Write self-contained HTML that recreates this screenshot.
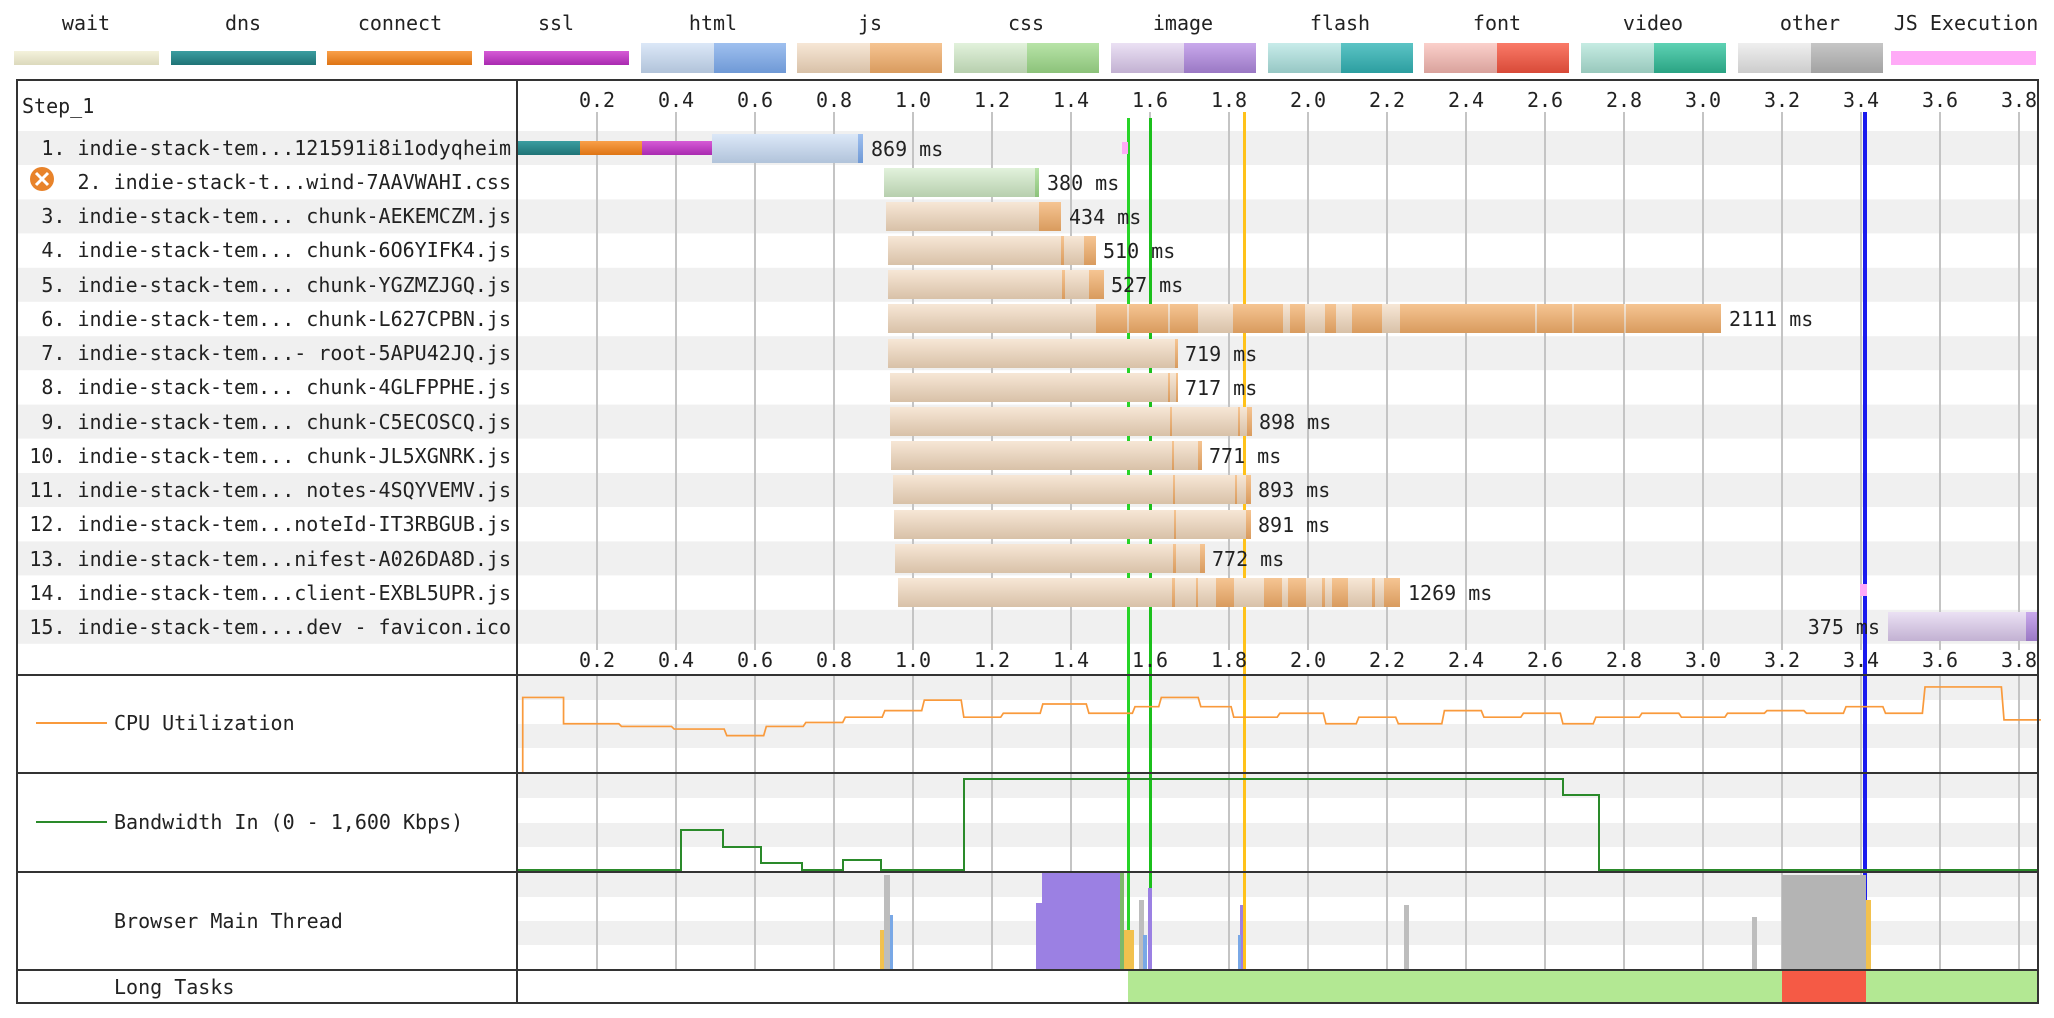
<!DOCTYPE html>
<html><head><meta charset="utf-8"><style>
html,body{margin:0;padding:0;background:#fff;width:2054px;height:1018px;overflow:hidden}
svg{display:block}
text{font-family:"DejaVu Sans Mono","Liberation Mono",monospace;font-size:20px;fill:#222}
</style></head><body>
<svg width="2054" height="1018" viewBox="0 0 2054 1018" xmlns="http://www.w3.org/2000/svg">
<defs>
<linearGradient id="gwait" x1="0" y1="0" x2="0" y2="1"><stop offset="0" stop-color="#f4f2dc"/><stop offset="1" stop-color="#dcd9bc"/></linearGradient>
<linearGradient id="gdns" x1="0" y1="0" x2="0" y2="1"><stop offset="0" stop-color="#3b9da0"/><stop offset="1" stop-color="#1f7376"/></linearGradient>
<linearGradient id="gcon" x1="0" y1="0" x2="0" y2="1"><stop offset="0" stop-color="#f9a04a"/><stop offset="1" stop-color="#de7414"/></linearGradient>
<linearGradient id="gssl" x1="0" y1="0" x2="0" y2="1"><stop offset="0" stop-color="#d65bd6"/><stop offset="1" stop-color="#a92ab0"/></linearGradient>
<linearGradient id="ghtmlL" x1="0" y1="0" x2="0" y2="1"><stop offset="0" stop-color="#dce8f8"/><stop offset="1" stop-color="#b1c3da"/></linearGradient>
<linearGradient id="ghtmlD" x1="0" y1="0" x2="0" y2="1"><stop offset="0" stop-color="#9fc0ef"/><stop offset="1" stop-color="#6f99d6"/></linearGradient>
<linearGradient id="gjsL" x1="0" y1="0" x2="0" y2="1"><stop offset="0" stop-color="#f7e7d6"/><stop offset="1" stop-color="#d8c1a8"/></linearGradient>
<linearGradient id="gjsD" x1="0" y1="0" x2="0" y2="1"><stop offset="0" stop-color="#f6c593"/><stop offset="1" stop-color="#d99b5e"/></linearGradient>
<linearGradient id="gcssL" x1="0" y1="0" x2="0" y2="1"><stop offset="0" stop-color="#e2f2dc"/><stop offset="1" stop-color="#b7cfae"/></linearGradient>
<linearGradient id="gcssD" x1="0" y1="0" x2="0" y2="1"><stop offset="0" stop-color="#b8e4a8"/><stop offset="1" stop-color="#8cc27a"/></linearGradient>
<linearGradient id="gimgL" x1="0" y1="0" x2="0" y2="1"><stop offset="0" stop-color="#ebe1f4"/><stop offset="1" stop-color="#c2b1d2"/></linearGradient>
<linearGradient id="gimgD" x1="0" y1="0" x2="0" y2="1"><stop offset="0" stop-color="#c9a9ec"/><stop offset="1" stop-color="#9a78c4"/></linearGradient>
<linearGradient id="gflL" x1="0" y1="0" x2="0" y2="1"><stop offset="0" stop-color="#c8ecea"/><stop offset="1" stop-color="#96c7c4"/></linearGradient>
<linearGradient id="gflD" x1="0" y1="0" x2="0" y2="1"><stop offset="0" stop-color="#5cc4c5"/><stop offset="1" stop-color="#2c9ea0"/></linearGradient>
<linearGradient id="gfoL" x1="0" y1="0" x2="0" y2="1"><stop offset="0" stop-color="#fbd0cb"/><stop offset="1" stop-color="#d9a29c"/></linearGradient>
<linearGradient id="gfoD" x1="0" y1="0" x2="0" y2="1"><stop offset="0" stop-color="#fa7a68"/><stop offset="1" stop-color="#d84a38"/></linearGradient>
<linearGradient id="gviL" x1="0" y1="0" x2="0" y2="1"><stop offset="0" stop-color="#c6ece3"/><stop offset="1" stop-color="#98c8bc"/></linearGradient>
<linearGradient id="gviD" x1="0" y1="0" x2="0" y2="1"><stop offset="0" stop-color="#5ed2b4"/><stop offset="1" stop-color="#2aa383"/></linearGradient>
<linearGradient id="gotL" x1="0" y1="0" x2="0" y2="1"><stop offset="0" stop-color="#efefef"/><stop offset="1" stop-color="#cccccc"/></linearGradient>
<linearGradient id="gotD" x1="0" y1="0" x2="0" y2="1"><stop offset="0" stop-color="#c6c6c6"/><stop offset="1" stop-color="#a2a2a2"/></linearGradient>
</defs>

<!-- Legend -->
<g text-anchor="middle">
<text x="86" y="30">wait</text>
<text x="243" y="30">dns</text>
<text x="400" y="30">connect</text>
<text x="556" y="30">ssl</text>
<text x="713" y="30">html</text>
<text x="870" y="30">js</text>
<text x="1026" y="30">css</text>
<text x="1183" y="30">image</text>
<text x="1340" y="30">flash</text>
<text x="1497" y="30">font</text>
<text x="1653" y="30">video</text>
<text x="1810" y="30">other</text>
<text x="1966" y="30">JS Execution</text>
</g>
<rect x="14" y="51" width="145" height="14" fill="url(#gwait)"/>
<rect x="171" y="51" width="145" height="14" fill="url(#gdns)"/>
<rect x="327" y="51" width="145" height="14" fill="url(#gcon)"/>
<rect x="484" y="51" width="145" height="14" fill="url(#gssl)"/>
<rect x="641" y="43" width="73" height="30" fill="url(#ghtmlL)"/><rect x="714" y="43" width="72" height="30" fill="url(#ghtmlD)"/>
<rect x="797" y="43" width="73" height="30" fill="url(#gjsL)"/><rect x="870" y="43" width="72" height="30" fill="url(#gjsD)"/>
<rect x="954" y="43" width="73" height="30" fill="url(#gcssL)"/><rect x="1027" y="43" width="72" height="30" fill="url(#gcssD)"/>
<rect x="1111" y="43" width="73" height="30" fill="url(#gimgL)"/><rect x="1184" y="43" width="72" height="30" fill="url(#gimgD)"/>
<rect x="1268" y="43" width="73" height="30" fill="url(#gflL)"/><rect x="1341" y="43" width="72" height="30" fill="url(#gflD)"/>
<rect x="1424" y="43" width="73" height="30" fill="url(#gfoL)"/><rect x="1497" y="43" width="72" height="30" fill="url(#gfoD)"/>
<rect x="1581" y="43" width="73" height="30" fill="url(#gviL)"/><rect x="1654" y="43" width="72" height="30" fill="url(#gviD)"/>
<rect x="1738" y="43" width="73" height="30" fill="url(#gotL)"/><rect x="1811" y="43" width="72" height="30" fill="url(#gotD)"/>
<rect x="1891" y="51" width="145" height="14" fill="#ffaaf7"/>

<!-- row bands -->
<g fill="#f0f0f0">
<rect x="18" y="131" width="2020" height="34"/>
<rect x="18" y="199.4" width="2020" height="34"/>
<rect x="18" y="267.8" width="2020" height="34"/>
<rect x="18" y="336.2" width="2020" height="34"/>
<rect x="18" y="404.6" width="2020" height="34"/>
<rect x="18" y="473" width="2020" height="34"/>
<rect x="18" y="541.4" width="2020" height="34"/>
<rect x="18" y="609.8" width="2020" height="34"/>
</g>
<!-- graph bands -->
<g fill="#f0f0f0">
<rect x="518" y="676" width="1520" height="24"/><rect x="518" y="724" width="1520" height="24"/>
<rect x="518" y="774" width="1520" height="24"/><rect x="518" y="823" width="1520" height="24"/>
<rect x="518" y="873" width="1520" height="24"/><rect x="518" y="921" width="1520" height="24"/>
</g>

<!-- gridlines -->
<g stroke="#c4c4c4" stroke-width="2">
<path d="M597 112V650M676 112V650M755 112V650M834 112V650M913 112V650M992 112V650M1071 112V650M1150 112V650M1229 112V650M1308 112V650M1387 112V650M1466 112V650M1545 112V650M1624 112V650M1703 112V650M1782 112V650M1861 112V650M1940 112V650M2019 112V650"/>
<path d="M597 676V969M676 676V969M755 676V969M834 676V969M913 676V969M992 676V969M1071 676V969M1150 676V969M1229 676V969M1308 676V969M1387 676V969M1466 676V969M1545 676V969M1624 676V969M1703 676V969M1782 676V969M1861 676V969M1940 676V969M2019 676V969"/>
</g>

<!-- event lines -->
<g>
<rect x="1127" y="118" width="3" height="851" fill="#28d428"/>
<rect x="1149" y="118" width="3" height="851" fill="#1bbf1b"/>
<rect x="1243" y="112" width="3" height="857" fill="#ffc21a"/>
<rect x="1863" y="112" width="4" height="857" fill="#1a1aee"/>
</g>

<!-- axis labels -->
<g text-anchor="middle">
<text x="597" y="107">0.2</text><text x="676" y="107">0.4</text><text x="755" y="107">0.6</text><text x="834" y="107">0.8</text><text x="913" y="107">1.0</text><text x="992" y="107">1.2</text><text x="1071" y="107">1.4</text><text x="1150" y="107">1.6</text><text x="1229" y="107">1.8</text><text x="1308" y="107">2.0</text><text x="1387" y="107">2.2</text><text x="1466" y="107">2.4</text><text x="1545" y="107">2.6</text><text x="1624" y="107">2.8</text><text x="1703" y="107">3.0</text><text x="1782" y="107">3.2</text><text x="1861" y="107">3.4</text><text x="1940" y="107">3.6</text><text x="2019" y="107">3.8</text>
<text x="597" y="667">0.2</text><text x="676" y="667">0.4</text><text x="755" y="667">0.6</text><text x="834" y="667">0.8</text><text x="913" y="667">1.0</text><text x="992" y="667">1.2</text><text x="1071" y="667">1.4</text><text x="1150" y="667">1.6</text><text x="1229" y="667">1.8</text><text x="1308" y="667">2.0</text><text x="1387" y="667">2.2</text><text x="1466" y="667">2.4</text><text x="1545" y="667">2.6</text><text x="1624" y="667">2.8</text><text x="1703" y="667">3.0</text><text x="1782" y="667">3.2</text><text x="1861" y="667">3.4</text><text x="1940" y="667">3.6</text><text x="2019" y="667">3.8</text>
</g>

<text x="22" y="113">Step_1</text>

<!-- row labels -->
<g text-anchor="end">
<text x="511" y="155">1. indie-stack-tem...121591i8i1odyqheim</text>
<text x="511" y="189">2. indie-stack-t...wind-7AAVWAHI.css</text>
<text x="511" y="223">3. indie-stack-tem... chunk-AEKEMCZM.js</text>
<text x="511" y="257">4. indie-stack-tem... chunk-6O6YIFK4.js</text>
<text x="511" y="292">5. indie-stack-tem... chunk-YGZMZJGQ.js</text>
<text x="511" y="326">6. indie-stack-tem... chunk-L627CPBN.js</text>
<text x="511" y="360">7. indie-stack-tem...- root-5APU42JQ.js</text>
<text x="511" y="394">8. indie-stack-tem... chunk-4GLFPPHE.js</text>
<text x="511" y="429">9. indie-stack-tem... chunk-C5ECOSCQ.js</text>
<text x="511" y="463">10. indie-stack-tem... chunk-JL5XGNRK.js</text>
<text x="511" y="497">11. indie-stack-tem... notes-4SQYVEMV.js</text>
<text x="511" y="531">12. indie-stack-tem...noteId-IT3RBGUB.js</text>
<text x="511" y="566">13. indie-stack-tem...nifest-A026DA8D.js</text>
<text x="511" y="600">14. indie-stack-tem...client-EXBL5UPR.js</text>
<text x="511" y="634">15. indie-stack-tem....dev - favicon.ico</text>
</g>
<circle cx="42" cy="179" r="12" fill="#e8832a"/>
<path d="M36 173L48 185M48 173L36 185" stroke="#fff" stroke-width="3"/>

<!-- bars -->
<!-- row1 -->
<rect x="518" y="141" width="62" height="14" fill="url(#gdns)"/>
<rect x="580" y="141" width="62" height="14" fill="url(#gcon)"/>
<rect x="642" y="141" width="72" height="14" fill="url(#gssl)"/>
<rect x="712" y="134" width="150" height="29" fill="url(#ghtmlL)"/>
<rect x="858" y="134" width="5" height="29" fill="url(#ghtmlD)"/>
<text x="871" y="156">869 ms</text>
<!-- row2 css -->
<rect x="884" y="168" width="155" height="29" fill="url(#gcssL)"/>
<rect x="1035" y="168" width="4" height="29" fill="url(#gcssD)"/>
<text x="1047" y="190">380 ms</text>
<!-- row3 -->
<rect x="886" y="202" width="175" height="29" fill="url(#gjsL)"/>
<rect x="1039" y="202" width="22" height="29" fill="url(#gjsD)"/>
<text x="1069" y="224">434 ms</text>
<!-- row4 -->
<rect x="888" y="236" width="208" height="29" fill="url(#gjsL)"/>
<rect x="1061" y="236" width="3" height="29" fill="url(#gjsD)"/>
<rect x="1084" y="236" width="12" height="29" fill="url(#gjsD)"/>
<text x="1103" y="258">510 ms</text>
<!-- row5 -->
<rect x="888" y="270" width="216" height="29" fill="url(#gjsL)"/>
<rect x="1062" y="270" width="3" height="29" fill="url(#gjsD)"/>
<rect x="1089" y="270" width="15" height="29" fill="url(#gjsD)"/>
<text x="1111" y="292">527 ms</text>
<!-- row6 -->
<rect x="888" y="304" width="833" height="29" fill="url(#gjsL)"/>
<g fill="url(#gjsD)">
<rect x="1096" y="304" width="31" height="29"/><rect x="1129" y="304" width="39" height="29"/><rect x="1170" y="304" width="28" height="29"/>
<rect x="1233" y="304" width="50" height="29"/><rect x="1290" y="304" width="15" height="29"/><rect x="1325" y="304" width="11" height="29"/>
<rect x="1352" y="304" width="30" height="29"/><rect x="1400" y="304" width="135" height="29"/><rect x="1537" y="304" width="35" height="29"/>
<rect x="1574" y="304" width="50" height="29"/><rect x="1626" y="304" width="95" height="29"/>
</g>
<text x="1729" y="326">2111 ms</text>
<!-- row7 -->
<rect x="888" y="339" width="290" height="29" fill="url(#gjsL)"/>
<rect x="1175" y="339" width="3" height="29" fill="url(#gjsD)"/>
<text x="1185" y="361">719 ms</text>
<!-- row8 -->
<rect x="890" y="373" width="288" height="29" fill="url(#gjsL)"/>
<rect x="1168" y="373" width="2" height="29" fill="url(#gjsD)"/>
<rect x="1176" y="373" width="2" height="29" fill="url(#gjsD)"/>
<text x="1185" y="395">717 ms</text>
<!-- row9 -->
<rect x="890" y="407" width="362" height="29" fill="url(#gjsL)"/>
<rect x="1170" y="407" width="2" height="29" fill="url(#gjsD)"/>
<rect x="1238" y="407" width="2" height="29" fill="url(#gjsD)"/>
<rect x="1247" y="407" width="5" height="29" fill="url(#gjsD)"/>
<text x="1259" y="429">898 ms</text>
<!-- row10 -->
<rect x="891" y="441" width="311" height="29" fill="url(#gjsL)"/>
<rect x="1172" y="441" width="2" height="29" fill="url(#gjsD)"/>
<rect x="1198" y="441" width="4" height="29" fill="url(#gjsD)"/>
<text x="1209" y="463">771 ms</text>
<!-- row11 -->
<rect x="893" y="475" width="358" height="29" fill="url(#gjsL)"/>
<rect x="1173" y="475" width="2" height="29" fill="url(#gjsD)"/>
<rect x="1235" y="475" width="2" height="29" fill="url(#gjsD)"/>
<rect x="1246" y="475" width="5" height="29" fill="url(#gjsD)"/>
<text x="1258" y="497">893 ms</text>
<!-- row12 -->
<rect x="894" y="510" width="357" height="29" fill="url(#gjsL)"/>
<rect x="1174" y="510" width="2" height="29" fill="url(#gjsD)"/>
<rect x="1246" y="510" width="5" height="29" fill="url(#gjsD)"/>
<text x="1258" y="532">891 ms</text>
<!-- row13 -->
<rect x="895" y="544" width="310" height="29" fill="url(#gjsL)"/>
<rect x="1173" y="544" width="3" height="29" fill="url(#gjsD)"/>
<rect x="1200" y="544" width="5" height="29" fill="url(#gjsD)"/>
<text x="1212" y="566">772 ms</text>
<!-- row14 -->
<rect x="898" y="578" width="502" height="29" fill="url(#gjsL)"/>
<g fill="url(#gjsD)">
<rect x="1172" y="578" width="3" height="29"/><rect x="1196" y="578" width="2" height="29"/><rect x="1216" y="578" width="18" height="29"/>
<rect x="1264" y="578" width="18" height="29"/><rect x="1288" y="578" width="18" height="29"/><rect x="1322" y="578" width="3" height="29"/>
<rect x="1332" y="578" width="16" height="29"/><rect x="1372" y="578" width="3" height="29"/><rect x="1384" y="578" width="16" height="29"/>
</g>
<text x="1408" y="600">1269 ms</text>
<!-- row15 -->
<rect x="1888" y="612" width="150" height="29" fill="url(#gimgL)"/>
<rect x="2026" y="612" width="12" height="29" fill="url(#gimgD)"/>
<text x="1880" y="634" text-anchor="end">375 ms</text>
<!-- js exec marks -->
<rect x="1122" y="142" width="6" height="12" fill="#ffaaf7"/>
<rect x="1860" y="584" width="7" height="12" fill="#ffaaf7"/>

<!-- CPU graph -->
<g transform="scale(1.3167) translate(0,-3.3)">
<polyline fill="none" stroke="#f99a3c" stroke-width="1.3" points="397,590 397,533 428,533 428,553 470,553 472,555 510,555 512,557 550,557 552,562 580,562 582,555 610,555 612,552 640,552 642,548 670,548 672,543 700,543 702,535 730,535 732,548 760,548 762,545 790,545 792,538 825,538 827,545 860,545 862,540 880,540 882,533 910,533 912,540 935,540 937,548 970,548 972,545 1005,545 1007,553 1030,553 1032,548 1060,548 1062,553 1095,553 1097,543 1125,543 1127,548 1155,548 1157,545 1185,545 1187,553 1210,553 1212,548 1245,548 1247,545 1275,545 1277,548 1310,548 1312,545 1340,545 1342,543 1370,543 1372,545 1400,545 1402,540 1430,540 1432,545 1460,545 1462,525 1520,525 1522,550 1550,550"/>
</g>
<!-- Bandwidth -->
<g transform="translate(0,0)">
<polyline fill="none" stroke="#2a8a2a" stroke-width="2" points="518,870 681,870 681,830 723,830 723,847 761,847 761,863 802,863 802,870 843,870 843,860 881,860 881,870 964,870 964,779 1563,779 1563,795 1599,795 1599,870 2038,870"/>
</g>

<!-- Main thread -->
<g>
<rect x="1036" y="903" width="7" height="66" fill="#9b80e3"/>
<rect x="1042" y="872" width="80" height="97" fill="#9b80e3"/>
<rect x="1120" y="872" width="4" height="97" fill="#7fb86a"/>
<rect x="1124" y="930" width="10" height="39" fill="#f2c14e"/>
<rect x="1139" y="900" width="5" height="69" fill="#bdbdbd"/>
<rect x="1143" y="935" width="4" height="34" fill="#79a8e6"/>
<rect x="1148" y="888" width="4" height="81" fill="#9b80e3"/>
<rect x="1240" y="905" width="3" height="64" fill="#9b80e3"/>
<rect x="1238" y="935" width="3" height="34" fill="#79a8e6"/>
<rect x="1404" y="905" width="5" height="64" fill="#bdbdbd"/>
<rect x="884" y="875" width="6" height="94" fill="#bdbdbd"/>
<rect x="890" y="915" width="3" height="54" fill="#79a8e6"/>
<rect x="880" y="930" width="4" height="39" fill="#f2c14e"/>
<rect x="1752" y="917" width="5" height="52" fill="#bdbdbd"/>
<rect x="1782" y="875" width="84" height="94" fill="#b4b4b4"/>
<rect x="1866" y="900" width="5" height="69" fill="#f2c14e"/>
</g>
<!-- Long tasks -->
<rect x="1128" y="971" width="910" height="32" fill="#b3e893"/>
<rect x="1782" y="971" width="84" height="32" fill="#f55a45"/>

<!-- graph labels -->
<line x1="36" y1="723" x2="107" y2="723" stroke="#f99a3c" stroke-width="2"/>
<text x="114" y="730">CPU Utilization</text>
<line x1="36" y1="822" x2="107" y2="822" stroke="#2a8a2a" stroke-width="2"/>
<text x="114" y="829">Bandwidth In (0 - 1,600 Kbps)</text>
<text x="114" y="928">Browser Main Thread</text>
<text x="114" y="994">Long Tasks</text>

<!-- borders -->
<g stroke="#333" stroke-width="2" fill="none">
<rect x="17" y="80" width="2021" height="923"/>
<line x1="517" y1="80" x2="517" y2="1003"/>
<line x1="17" y1="675" x2="2038" y2="675"/>
<line x1="17" y1="773" x2="2038" y2="773"/>
<line x1="17" y1="872" x2="2038" y2="872"/>
<line x1="17" y1="970" x2="2038" y2="970"/>
</g>
</svg>
</body></html>
